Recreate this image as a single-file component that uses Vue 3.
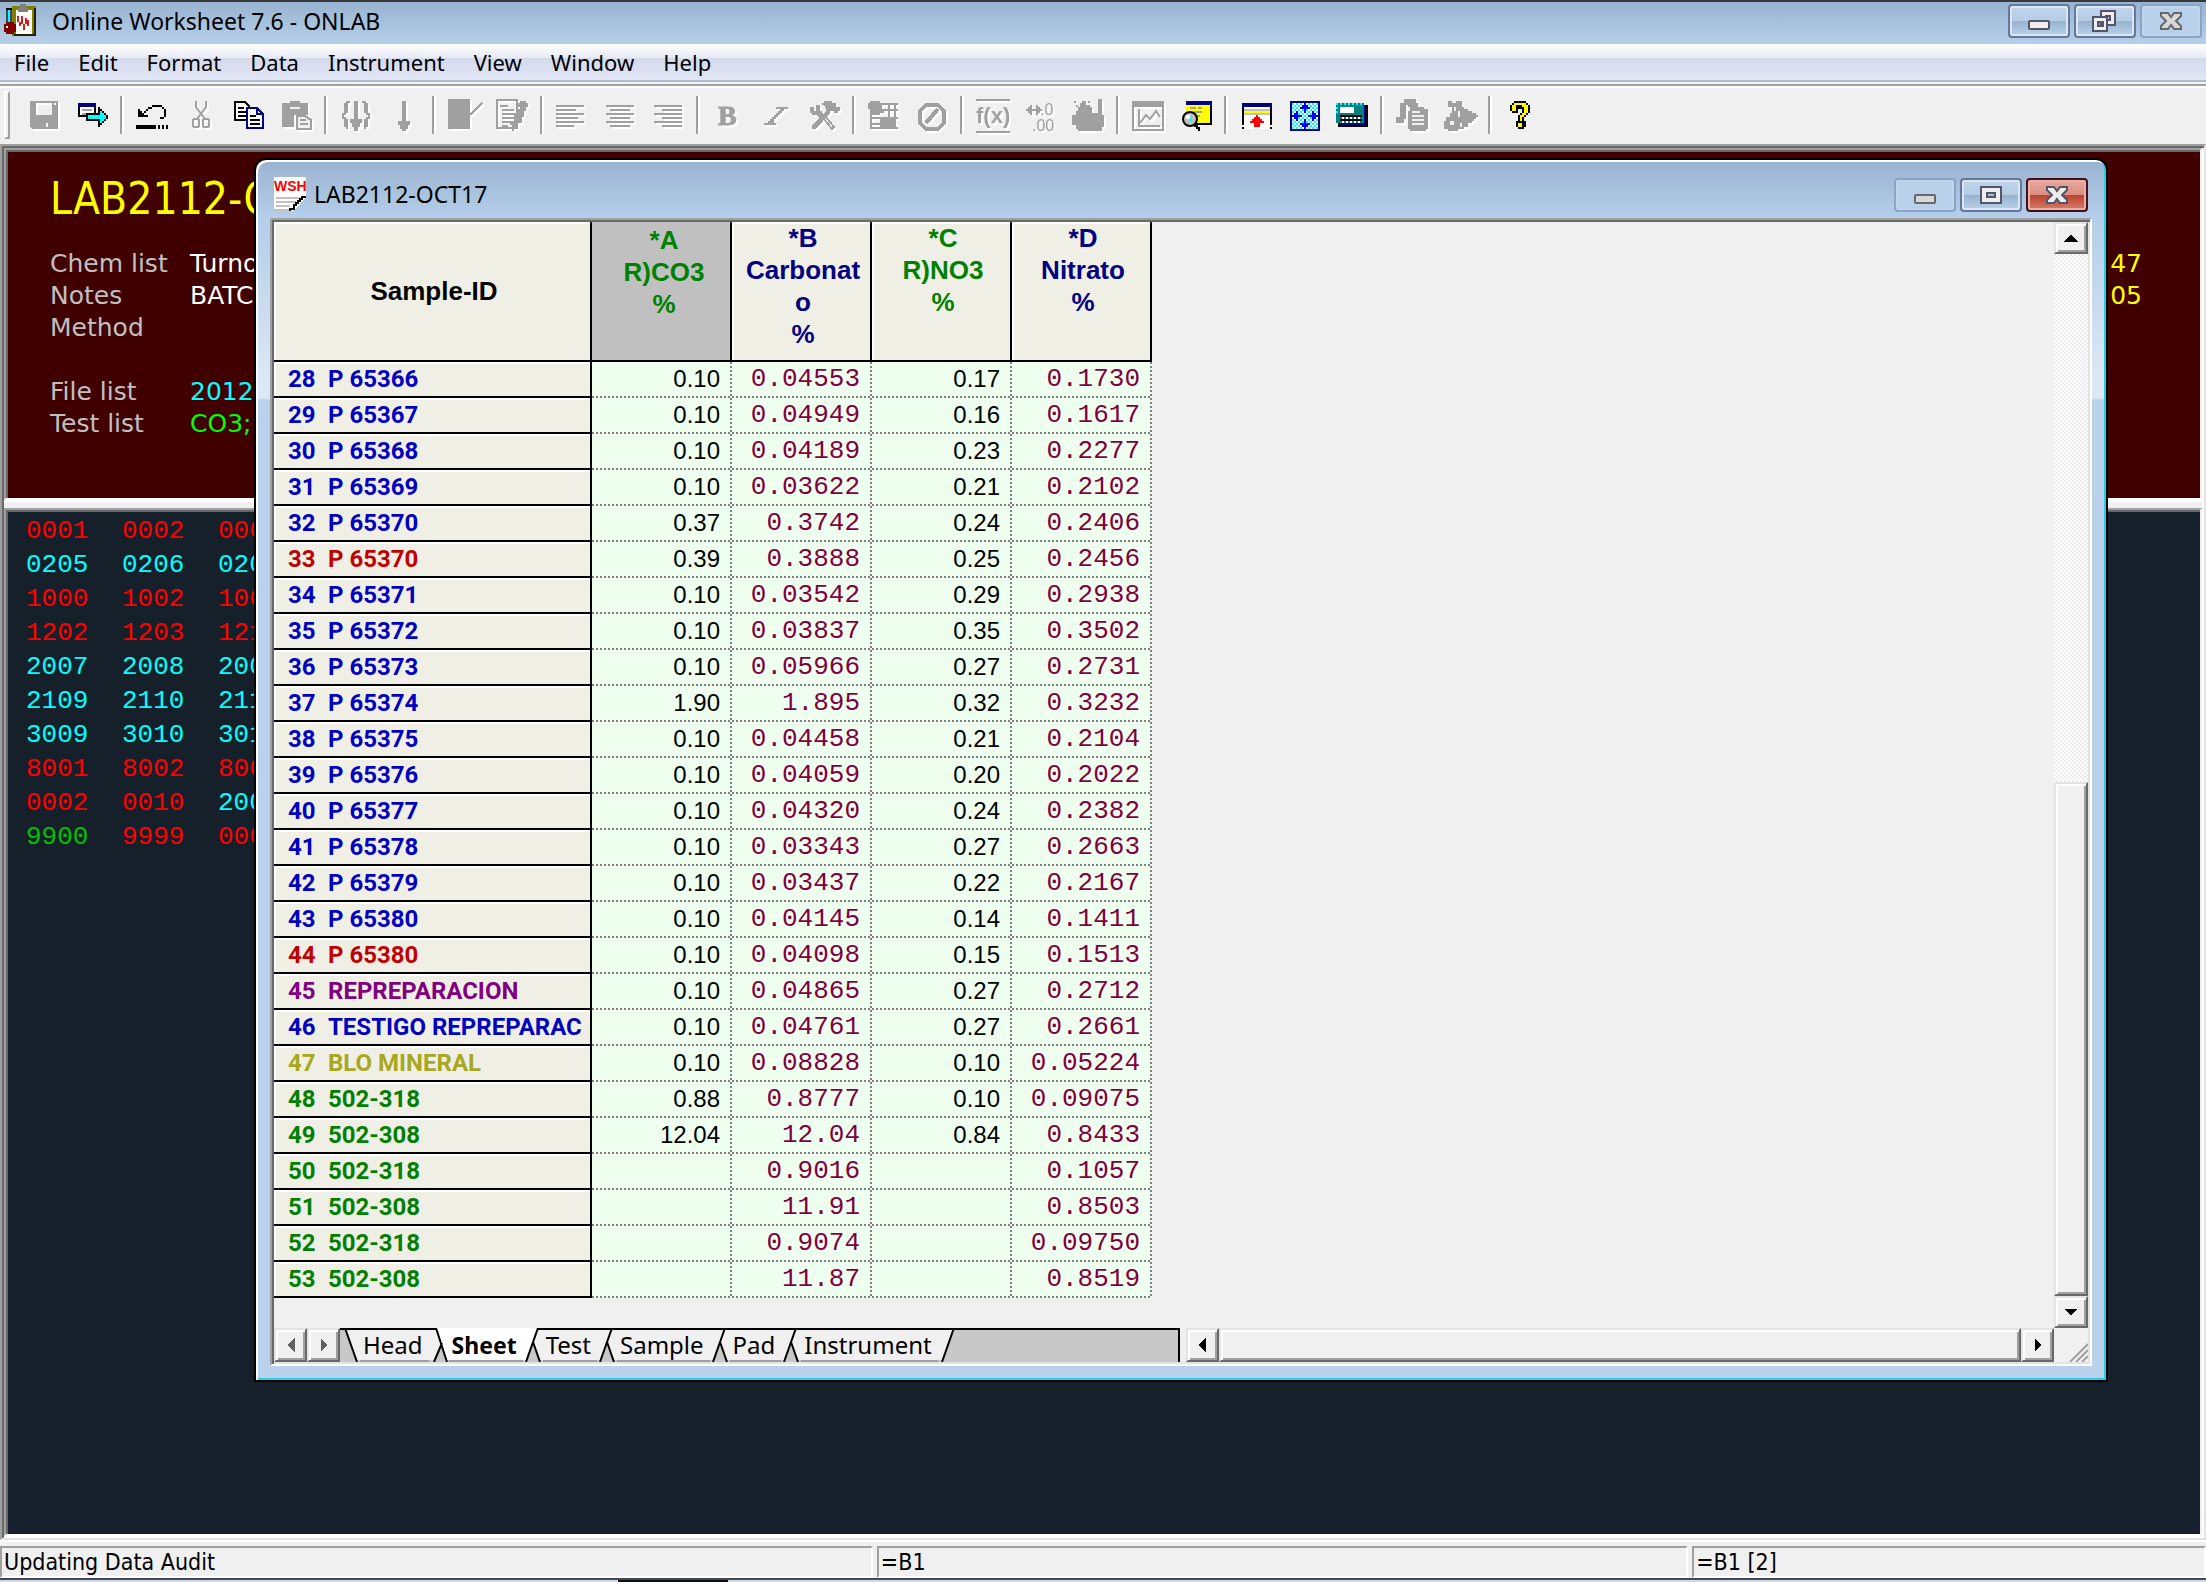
<template>
	<div class="app">
		<header class="titlebar">
			<svg class="app-icon" viewBox="0 0 16 16" shape-rendering="crispEdges">
				<path d="M4 1h12v15H4z" fill="#808000" />
				<path d="M15 2h1v14H5v-1h10z" fill="#202000" />
				<path d="M6 3h8v12H6z" fill="#fff" />
				<path d="M7 2h5v2H7zM8 0h3v2H8z" fill="#808080" />
				<path d="M7 6v3M9 6v4M11 7v3M8 9v2M10 10v3M12 8v3" stroke="#d02020" />
				<path d="M1 2h3v1H1z" fill="#000" />
				<path d="M2 3h1v6H2z" fill="#0ff" />
				<path d="M1 3h1v6H1zM3 3h1v6H3z" fill="#446" />
				<path d="M1 9h4v1h1v4H5v1H1v-1H0v-4h1z" fill="#800000" />
				<path d="M1 11h1v1H1z" fill="#fff" />
			</svg>
			<h1>Online Worksheet 7.6 - ONLAB</h1>
			<div class="window-buttons">
				<button type="button" aria-label="Minimize" class="win-btn">
					<svg viewBox="0 0 31 17"><rect x="10.5" y="8.5" width="10" height="4" rx="0.5" /></svg>
				</button>
				<button type="button" aria-label="Restore" class="win-btn">
					<svg viewBox="0 0 31 17">
						<path d="M13.5 3.500h7v7h-7zM16 6h2v2h-2z" fill-rule="evenodd" />
						<path d="M9.500 6.500h7v7h-7zM12 9h2.500v2H12z" fill-rule="evenodd" />
					</svg>
				</button>
				<button type="button" aria-label="Close" class="win-btn pale">
					<svg viewBox="0 0 31 17">
						<path d="M10.500 4.500h3.500l1.500 2 1.500-2h3.500v1.500l-2.500 2.500 2.500 2.500v1.500H17l-1.500-2-1.500 2h-3.500V11L13 8.500 10.500 6z" />
					</svg>
				</button>
			</div>
		</header>

		<nav class="menubar">
			<button v-for="item in menu" :key="item" type="button">{{ item }}</button>
		</nav>

		<div class="toolbar">
			<span class="grip"></span>
			<template v-for="(tool, i) in tools" :key="i">
				<span v-if="tool === '|'" class="separator"></span>
				<button v-else type="button" :aria-label="tool.name" :disabled="tool.off">
					<svg viewBox="0 0 16 16" shape-rendering="crispEdges" v-html="tool.art"></svg>
				</button>
			</template>
		</div>

		<main class="workspace">
			<section class="head-pane">
				<h2>LAB2112-OCT17</h2>
				<div class="head-body">
					<dl>
						<template v-for="(line, i) in headLines" :key="i">
							<dt>{{ line.label }}</dt>
							<dd :class="line.tone">{{ line.value }}</dd>
						</template>
					</dl>
					<div class="times">
						<span>47</span>
						<span>05</span>
					</div>
				</div>
			</section>

			<section class="code-pane">
				<div v-for="(row, i) in codes" :key="i" class="code-row">
					<span v-for="(code, j) in row" :key="j" :class="code[1]">{{ code[0] }}</span>
				</div>
			</section>

			<section class="child">
				<header class="child-title">
					<svg class="doc-icon" viewBox="0 0 16 17" shape-rendering="crispEdges">
						<path d="M0 0h16v10l-6 7H0z" fill="#fff" />
						<path d="M1 10.500h12M1 12.500h10M1 14.500h7M0 16.500h8" stroke="#c0c0c0" />
						<path d="M16 10h-2v1h-1v1h-1v1h-1v1h-1v2H8v1" fill="none" stroke="#000" />
						<text x="0" y="7" font-size="7" class="doc-text">WSH</text>
					</svg>
					<h2>LAB2112-OCT17</h2>
					<div class="window-buttons">
						<button type="button" aria-label="Minimize sheet" class="win-btn pale">
							<svg viewBox="0 0 31 17"><rect x="10.5" y="8.5" width="10" height="4" rx="0.5" /></svg>
						</button>
						<button type="button" aria-label="Maximize sheet" class="win-btn">
							<svg viewBox="0 0 31 17">
								<path d="M10.500 4.500h10v8h-10zM13.500 7.500h4v2h-4z" fill-rule="evenodd" />
							</svg>
						</button>
						<button type="button" aria-label="Close sheet" class="win-btn close">
							<svg viewBox="0 0 31 17">
								<path d="M10.500 4.500h3.500l1.500 2 1.500-2h3.500v1.500l-2.500 2.500 2.500 2.500v1.500H17l-1.500-2-1.500 2h-3.500V11L13 8.500 10.500 6z" />
							</svg>
						</button>
					</div>
				</header>

				<div class="client">
					<div class="sheet-row">
						<div class="sheet">
							<table>
								<colgroup>
									<col class="id-col" />
									<col v-for="n in 4" :key="n" class="value-col" />
								</colgroup>
								<thead>
									<tr>
										<th scope="col" class="id-head">Sample-ID</th>
										<th scope="col" class="calc selected">*A<br />R)CO3<br />%</th>
										<th scope="col" class="raw">*B<br />Carbonat<br />o<br />%</th>
										<th scope="col" class="calc">*C<br />R)NO3<br />%</th>
										<th scope="col" class="raw">*D<br />Nitrato<br />%</th>
									</tr>
								</thead>
								<tbody>
									<tr v-for="(row, i) in rows" :key="i">
										<th scope="row" :class="row[0]">
											<span class="index">{{ i + 28 }}</span>{{ row[1] }}
										</th>
										<td>{{ row[2] }}</td>
										<td class="mono">{{ row[3] }}</td>
										<td>{{ row[4] }}</td>
										<td class="mono">{{ row[5] }}</td>
									</tr>
								</tbody>
							</table>
						</div>
						<div class="vscroll">
							<button type="button" aria-label="Scroll up" class="bevel">
								<svg viewBox="0 0 16 16" shape-rendering="crispEdges"><path d="M8 6l4 4H4z" /></svg>
							</button>
							<span class="track"></span>
							<span class="bevel thumb"></span>
							<button type="button" aria-label="Scroll down" class="bevel">
								<svg viewBox="0 0 16 16" shape-rendering="crispEdges"><path d="M8 10L4 6h8z" /></svg>
							</button>
						</div>
					</div>

					<div class="bottom-row">
						<div class="tab-strip">
							<button type="button" aria-label="Previous tab" class="bevel dim">
								<svg viewBox="0 0 16 16" shape-rendering="crispEdges"><path d="M6 8l4-4v8z" /></svg>
							</button>
							<button type="button" aria-label="Next tab" class="bevel dim">
								<svg viewBox="0 0 16 16" shape-rendering="crispEdges"><path d="M10 8L6 4v8z" /></svg>
							</button>
							<div class="tabs">
								<svg class="slant" viewBox="0 0 20 34">
									<path d="M6 2h14v30h-4z" fill="#f0f0f0" />
									<path d="M0 1h20M5 0l12 34" stroke="#000" stroke-width="2" />
								</svg>
								<template v-for="(tab, i) in tabs" :key="tab">
									<button type="button" class="tab" :class="{ active: tab === 'Sheet' }">{{ tab }}</button>
									<svg class="slant" viewBox="0 0 20 34">
										<template v-if="tab === 'Head'">
											<path d="M0 0h20v32H0z" fill="#f0f0f0" />
											<path d="M7 0h13v32h-2z" fill="#fff" />
											<path d="M12 17L4 34h14z" fill="#c8c8c8" />
											<path d="M0 1h7M7 0l11 34M13 15L5 34" stroke="#000" stroke-width="2" fill="none" />
										</template>
										<template v-else-if="i < tabs.length - 1">
											<path d="M0 0h20v32H0z" fill="#f0f0f0" />
											<path d="M0 0h14L4 32H0z" :fill="tab === 'Sheet' ? '#fff' : '#f0f0f0'" />
											<path d="M9 15L3 34h14z" fill="#c8c8c8" />
											<path
												:d="tab === 'Sheet' ? 'M14 1h6' : 'M0 1h20'"
												stroke="#000"
												stroke-width="2"
											/>
											<path d="M15 0L3 34M10 14l7 20" stroke="#000" stroke-width="2" fill="none" />
										</template>
										<template v-else>
											<path d="M0 0h15L4 32H0z" fill="#f0f0f0" />
											<path d="M0 1h20M16 0L4 34" stroke="#000" stroke-width="2" />
										</template>
									</svg>
								</template>
							</div>
						</div>
						<div class="hscroll">
							<button type="button" aria-label="Scroll left" class="bevel">
								<svg viewBox="0 0 16 16" shape-rendering="crispEdges"><path d="M6 8l4-4v8z" /></svg>
							</button>
							<span class="bevel thumb"></span>
							<button type="button" aria-label="Scroll right" class="bevel">
								<svg viewBox="0 0 16 16" shape-rendering="crispEdges"><path d="M10 8L6 4v8z" /></svg>
							</button>
						</div>
						<svg class="size-grip" viewBox="0 0 34 34">
							<path d="M16 34L34 16M22 34l12-12M28 34l6-6" stroke="#a0a0a0" stroke-width="2" />
						</svg>
					</div>
				</div>
			</section>
		</main>

		<footer class="statusbar">
			<span class="wide">Updating Data Audit</span>
			<span class="mid">=B1</span>
			<span class="end">=B1 [2]</span>
		</footer>
		<div class="taskbar-edge"></div>
	</div>
</template>

<script setup>
const menu = ['File', 'Edit', 'Format', 'Data', 'Instrument', 'View', 'Window', 'Help']
const tabs = ['Head', 'Sheet', 'Test', 'Sample', 'Pad', 'Instrument']

const headLines = [
	{ label: 'Chem list', value: 'Turno', tone: 'white' },
	{ label: 'Notes', value: 'BATCH', tone: 'white' },
	{ label: 'Method', value: '', tone: 'white' },
	{ label: '', value: '', tone: 'white' },
	{ label: 'File list', value: '2012', tone: 'cyan' },
	{ label: 'Test list', value: 'CO3;', tone: 'lime' }
]

const codes = [
	[['0001', 'red'], ['0002', 'red'], ['000', 'red']],
	[['0205', 'cyan'], ['0206', 'cyan'], ['020', 'cyan']],
	[['1000', 'red'], ['1002', 'red'], ['100', 'red']],
	[['1202', 'red'], ['1203', 'red'], ['121', 'red']],
	[['2007', 'cyan'], ['2008', 'cyan'], ['200', 'cyan']],
	[['2109', 'cyan'], ['2110', 'cyan'], ['211', 'cyan']],
	[['3009', 'cyan'], ['3010', 'cyan'], ['301', 'cyan']],
	[['8001', 'red'], ['8002', 'red'], ['800', 'red']],
	[['0002', 'red'], ['0010', 'red'], ['200', 'cyan']],
	[['9900', 'green'], ['9999', 'red'], ['000', 'red']]
]

// colour, sample id, A, B, C, D
const rows = [
	['blue', 'P 65366', '0.10', '0.04553', '0.17', '0.1730'],
	['blue', 'P 65367', '0.10', '0.04949', '0.16', '0.1617'],
	['blue', 'P 65368', '0.10', '0.04189', '0.23', '0.2277'],
	['blue', 'P 65369', '0.10', '0.03622', '0.21', '0.2102'],
	['blue', 'P 65370', '0.37', '0.3742', '0.24', '0.2406'],
	['red', 'P 65370', '0.39', '0.3888', '0.25', '0.2456'],
	['blue', 'P 65371', '0.10', '0.03542', '0.29', '0.2938'],
	['blue', 'P 65372', '0.10', '0.03837', '0.35', '0.3502'],
	['blue', 'P 65373', '0.10', '0.05966', '0.27', '0.2731'],
	['blue', 'P 65374', '1.90', '1.895', '0.32', '0.3232'],
	['blue', 'P 65375', '0.10', '0.04458', '0.21', '0.2104'],
	['blue', 'P 65376', '0.10', '0.04059', '0.20', '0.2022'],
	['blue', 'P 65377', '0.10', '0.04320', '0.24', '0.2382'],
	['blue', 'P 65378', '0.10', '0.03343', '0.27', '0.2663'],
	['blue', 'P 65379', '0.10', '0.03437', '0.22', '0.2167'],
	['blue', 'P 65380', '0.10', '0.04145', '0.14', '0.1411'],
	['red', 'P 65380', '0.10', '0.04098', '0.15', '0.1513'],
	['purple', 'REPREPARACION', '0.10', '0.04865', '0.27', '0.2712'],
	['blue', 'TESTIGO REPREPARAC', '0.10', '0.04761', '0.27', '0.2661'],
	['olive', 'BLO MINERAL', '0.10', '0.08828', '0.10', '0.05224'],
	['green', '502-318', '0.88', '0.8777', '0.10', '0.09075'],
	['green', '502-308', '12.04', '12.04', '0.84', '0.8433'],
	['green', '502-318', '', '0.9016', '', '0.1057'],
	['green', '502-308', '', '11.91', '', '0.8503'],
	['green', '502-318', '', '0.9074', '', '0.09750'],
	['green', '502-308', '', '11.87', '', '0.8519']
]

const G = '#a0a0a0'

/**
 * Toolbar artwork, drawn on a 16 x 16 grid
 */
const tools = [
	{ name: 'Save', off: true, art: `<path fill="${G}" fill-rule="evenodd" d="M1 1h14v14H2l-1-1zM4 2v6h8V2zM13 2v1h1V2zM9 12v2h1v-2z"/>` },
	{ name: 'Send', art: '<path fill="#000" d="M1 2h9v7H1z"/><path fill="#000080" d="M1 2h9v2H1z"/><path fill="#fff" d="M2 4h7v4H2z"/><path fill="#a0a0a0" d="M3 5h5v1H3zM3 7h3v1H3z"/><path fill="#000" d="M5 7h6V4h1v1h1v1h1v1h1v1h1v2h-1v1h-1v1h-1v1h-1v1h-1v-3H5z"/><path fill="#0ff" d="M6 8h6V6h1v1h1v1h1v2h-1v1h-1v1h-1v-2H6z"/>' },
	'|',
	{ name: 'Undo', art: '<path fill="#000" d="M1 5h1v1h1v1h1v1h2v1H1zM4 6h1V5h1V4h2V3h5v1h1v1h1v4h-1v1h-2V9h2V5h-1V4H8v1H6v1H5v1H4zM0 13h10v2H0zM11 13h1v2h-1zM13 13h1v2h-1zM15 13h1v2h-1z"/>' },
	{ name: 'Cut', off: true, art: `<path fill="none" stroke="${G}" shape-rendering="auto" d="M6 1v3l4.500 6M11 1v3L6.500 10"/><rect x="4.500" y="10" width="3" height="4" rx="1" fill="none" stroke="${G}"/><rect x="9.500" y="10" width="3" height="4" rx="1" fill="none" stroke="${G}"/>` },
	{ name: 'Copy', art: '<path fill="#fff" stroke="#000" d="M1.500 1.500h5l2 2v7h-7z"/><path stroke="#000" d="M3 4.500h3M3 6.500h4M3 8.500h4"/><path fill="#fff" stroke="#000080" d="M7.500 4.500h5l3 3v7h-8z"/><path fill="none" stroke="#000080" d="M12.500 4.500v3h3"/><path stroke="#000" d="M9 8.500h3M9 10.500h5M9 12.500h5"/>' },
	{ name: 'Paste', off: true, art: `<path fill="${G}" d="M1 2h4V1h5v1h4v6H7v6H1z"/><path stroke="#f0f0f0" d="M5 4.500h5"/><path fill="#f0f0f0" stroke="${G}" d="M8.500 8.500h4l3 2v4.500h-7z"/><path stroke="${G}" d="M10 10.500h3M10 12.500h4"/>` },
	'|',
	{ name: 'Fill all', off: true, art: `<path fill="${G}" d="M3 1h2v1H4v5H3v1H2v1h1v1h1v5h1v-1 1H3v-1H2v-4H1V7h1V2h1zM13 1h-2v1h1v5h1v1h1v1h-1v1h-1v5h-1 2v-1h1v-4h1V7h-1V2h-1zM7 1h2v9h2v2h-1v2H9v2H7v-2H6v-2H5v-2h2z"/>` },
	{ name: 'Fill down', off: true, art: `<path fill="${G}" d="M7 1h2v10h2v2h-1v2H9v1H7v-1H6v-2H5v-2h2z"/>` },
	'|',
	{ name: 'Open record', off: true, art: `<path fill="${G}" d="M0 0h11v15H0z"/><path stroke="${G}" d="M11 8l6-6"/>` },
	{ name: 'Edit record', off: true, art: `<path fill="none" stroke="${G}" d="M.500.500h10v14H.500z"/><path stroke="${G}" d="M2 3.500h4M3 5.500h6M3 7.500h8M3 9.500h6M3 11.500h7M3 13.500h3"/><path fill="${G}" d="M12 1h3v1h1v2h-1v2h-1v3h-1v3h-2v2H9v2H8v-3H7v-2h2V8h2V5h1V4h-1V2h1z"/>` },
	'|',
	{ name: 'Align left', off: true, art: `<path stroke="${G}" d="M0 3.500h14M0 5.500h10M0 7.500h14M0 9.500h11M0 11.500h14M0 13.500h9"/>` },
	{ name: 'Center', off: true, art: `<path stroke="${G}" d="M1 3.500h14M3 5.500h10M1 7.500h14M3 9.500h10M1 11.500h14M3 13.500h10"/>` },
	{ name: 'Align right', off: true, art: `<path stroke="${G}" d="M1 3.500h14M5 5.500h10M1 7.500h14M5 9.500h10M1 11.500h14M5 13.500h10"/>` },
	'|',
	{ name: 'Bold', off: true, art: `<text x="3" y="13" font-family="Liberation Serif, serif" font-weight="700" font-size="14" stroke="${G}" stroke-width=".5" fill="${G}">B</text>` },
	{ name: 'Italic', off: true, art: `<path fill="${G}" d="M8 4h6v1h-2v1h-1v1h-1v1h-1v1H8v1H7v2h1v1H2v-1h2v-1h1v-1h1V9h1V8h1V7h1V6h1V5H8z"/>` },
	{ name: 'Tools', off: true, art: `<path fill="${G}" d="M1 4h2v2h1V3h2v3h1v1l2 2-2 2-3-3H2V7H1zM7 2h1V1h4v1h2v2h2v2h-1v1h-2V6h-2v1l-7 8H2v-2l7-7V5L8 3H7z"/><path stroke="${G}" fill="none" d="M8 10l4 5 1-1-4-5"/>` },
	'|',
	{ name: 'Table setup', off: true, art: `<path fill="none" stroke="${G}" d="M1.500 6v8.500h7M1 9.500h6M1 12.500h6M7 2.500h8M7 5.500h8M7 9.500h8M10.500 2v8M13.500 2v8M12 14.500h3"/><path fill="${G}" d="M1 1h5v1h1v4h1v1H6v1H2V6H1V5H0V2h1zM8 9h4v1h2v4h-1v1H8v-1H6v-4h2z"/>` },
	{ name: 'Disable', off: true, art: `<path fill="none" stroke="${G}" stroke-width="2" d="M5 3h6l3 3v6l-3 3H5l-3-3V6z"/><path stroke="${G}" stroke-width="2" d="M5 12l6-7"/>` },
	'|',
	{ name: 'Function', off: true, art: `<path fill="${G}" d="M0 0h17v1H0zM0 16h17v1H0z"/><text x="0" y="12" font-family="Liberation Sans, sans-serif" font-weight="700" font-size="11" fill="${G}">f(x)</text>` },
	{ name: 'Decimals', off: true, art: `<path fill="${G}" d="M1 5h1V4h1V3h1v2h2V3h1v1h1v1h1v1H8v1H7v1H6V6H4v2H3V7H2V6H1z"/><text x="8" y="8" font-family="Liberation Sans, sans-serif" font-size="8" fill="${G}">.0</text><text x="4" y="16" font-family="Liberation Sans, sans-serif" font-size="8" fill="${G}">.00</text>` },
	{ name: 'Hold', off: true, art: `<path fill="${G}" d="M1 1h1v1H1zM8 1h1v1H8zM2 3h1v1H2zM4 2h1V1h2v2h2v1h1v3h3V0h2v8h1v6h-1v2H3v-1H2v-2H0V8h2V6h1V4h1z"/>` },
	'|',
	{ name: 'Chart', off: true, art: `<path fill="${G}" fill-rule="evenodd" d="M0 1h16v15H0zM1 4v11h14V4z"/><path fill="none" stroke="${G}" d="M3.500 5v8.500H14"/><path fill="none" stroke="${G}" shape-rendering="auto" d="M4 12l3-4 2 2 3-4 2 3"/>` },
	{ name: 'Find', art: '<path fill="#000" d="M4 2h12v11H4z"/><path fill="#ff0" d="M3 3h12v9H3z"/><path fill="#000080" d="M3 1h13v2H3z"/><path fill="#a0a0a0" d="M5 4h3v1H5zM9 4h2v1H9zM7 6h4v1H7zM8 8h2v1H8z"/><circle cx="5" cy="10" r="3.500" fill="#c0c0c0" stroke="#000" shape-rendering="auto"/><path fill="#fff" d="M3 8h2v2H3z"/><path fill="#0ff" d="M5 9h1v2H5z"/><path fill="#000" d="M7 12h2v2h1v2H9v-1H8v-1H7z"/>' },
	'|',
	{ name: 'Move up', art: '<path fill="#fff" d="M1 2h14v13H1z"/><path fill="#000080" d="M1 2h15v2H1z"/><path fill="#c0c0c0" d="M2 5h13v3H2z"/><path fill="#ff0" d="M2 6h13v1H2z"/><path fill="#000" d="M1 4h1v9H1zM15 4h1v9h-1zM1 14h1v1H1zM15 14h1v1h-1z"/><path fill="#f00" d="M8 8h1v1h1v1h1v1h1v1h-2v2H7v-2H5v-1h1v-1h1V9h1z"/>' },
	{ name: 'Expand', art: '<defs><pattern id="check" width="2" height="2" patternUnits="userSpaceOnUse"><path fill="#fff" d="M0 0h2v2H0z"/><path fill="#0ff" d="M0 0h1v1H0zM1 1h1v1H1z"/></pattern></defs><path fill="url(#check)" stroke="#000080" d="M1.500 1.500h14v14h-14z"/><path fill="#00f" d="M8 2h1v1h1v1h1v1H9v2H8V5H6V4h1V3h1zM8 15h1v-1h1v-1h1v-1H9v-2H8v2H6v1h1v1h1zM2 8h1V7h1V6h1v2h2v1H5v2H4v-1H3V9H2zM15 8h-1V7h-1V6h-1v2h-2v1h2v2h1v-1h1V9h1z"/>' },
	{ name: 'Calculator', art: '<path fill="#000" d="M1 3h15v11H1z"/><path fill="#000080" d="M14 3h1v10H2v-1h12z"/><path fill="#008080" d="M0 2h14v10H0z"/><path fill="#0ff" d="M0 2h1v1H0zM2 2h1v1H2zM4 2h1v1H4zM6 2h1v1H6zM8 2h1v1H8zM10 2h1v1h-1zM12 2h1v1h-1zM0 4h1v1H0zM0 6h1v1H0z"/><path fill="#fff" d="M2 4h7v3H2zM3 9h1v1H3zM5 9h1v1H5zM7 9h1v1H7zM9 9h1v1H9zM11 9h1v1h-1zM3 11h1v1H3zM5 11h1v1H5zM7 11h1v1H7zM9 11h1v1H9zM11 11h1v1h-1z"/><path fill="#000" d="M2 8h11v1H2zM2 10h11v1H2z"/>' },
	'|',
	{ name: 'Documents', off: true, art: `<path fill="${G}" d="M4 0h6v2h1v2h3v1h2v10h-1v1H7v-1H6V6h1V4H6V3H5v7H4v2H0V9h2V2h2z"/><path stroke="#f0f0f0" d="M8 6.500h4M8 8.500h6M8 10.500h6M8 12.500h6"/>` },
	{ name: 'Labels', off: true, art: `<path fill="${G}" d="M2 1h2v1h2V1h3v3h1v1h2v1h2v1h2v1h1v1h-1v1h-1v1h-1v1h-2v2h-2v1H7v1H2v-1H0v-4h1v-2h2V7h1V4H2z"/><path fill="#f0f0f0" d="M5 4h1v2H5zM7 6h1v3H7zM3 11h2v2H3zM8 12h1v2H8z"/>` },
	'|',
	{ name: 'Help', art: '<path fill="#000" d="M5 1h6v1h1v1h1v4h-1v1h-1v1h-1v2h1v3h-1v1H7v-1H6v-3h1V8h1V7h1V5H7v2H4V6H3V3h1V2h1z"/><path fill="#ff0" d="M5 2h6v1h1v4h-1v1h-1v1H9v2H8V8h1V7h1V4H9V3H6v3H4V3h1zM7 12h2v2H7z"/>' }
]
</script>

<style>
body {
	margin: 0;
}
</style>

<style scoped>
.app {
	min-height: 100vh;
	display: flex;
	flex-direction: column;
	background: #f0f0f0;
	color: #000;
	font-family: 'Noto Sans', 'Open Sans', sans-serif;
	font-size: 22px;
}

button {
	font: inherit;
	color: inherit;
	margin: 0;
	padding: 0;
	border: 0;
	background: none;
}

h1,
h2,
dl,
dd {
	margin: 0;
	font-weight: 400;
}

.titlebar {
	box-sizing: border-box;
	height: 44px;
	padding: 2px 4px 0;
	border-top: 2px solid #38393c;
	background: linear-gradient(#98b3d0, #b6d0e9);
	display: flex;
	align-items: flex-start;
	gap: 16px;

	h1 {
		flex: 1;
		font-size: 23px;
		line-height: 34px;
	}
}

.app-icon {
	width: 32px;
	height: 32px;
}

.window-buttons {
	display: flex;
	gap: 4px;
}

.win-btn {
	box-sizing: border-box;
	width: 62px;
	height: 34px;
	border: 2px solid #63789a;
	border-radius: 4px;
	background: linear-gradient(#c1d5eb, #b5cce5 50%, #97b2cf 50%, #bad2eb);
	box-shadow: inset 0 0 0 2px #dbe6f6;

	svg {
		display: block;
		width: 62px;
		height: 34px;
		margin: -2px;
		fill: #eee;
		stroke: #53566b;
	}

	&.pale {
		border-color: #8ba4c4;
		background: #b8d0ea;
		box-shadow: inset 0 0 0 2px #bfd5ee;

		svg {
			fill: #d8d8d8;
			stroke: #66686c;
		}
	}

	&.close {
		border-color: #44101c;
		background: linear-gradient(#e9a79c, #dd8e82 50%, #b9402c 50%, #d5806c);
		box-shadow: inset 0 0 0 2px #e9b0a8;
	}
}

.menubar {
	box-sizing: border-box;
	height: 38px;
	border-bottom: 2px solid #b5b9cd;
	background: linear-gradient(#fff, #e8ebf5 38%, #d4daec 40%, #e0e6f6);
	display: flex;

	button {
		padding: 0 15px 0 14px;
		line-height: 36px;
	}
}

.toolbar {
	box-sizing: border-box;
	height: 60px;
	margin-top: 2px;
	padding: 2px 4px;
	border-top: 2px solid #a0a0a0;
	box-shadow: inset 0 2px #fff;
	display: flex;
	align-items: center;

	button {
		width: 48px;
		height: 48px;
		display: grid;
		place-items: center;
	}

	svg {
		width: 32px;
		height: 32px;
		overflow: visible;
	}

	button:disabled svg {
		filter: drop-shadow(2px 2px 0 #fff);
	}
}

.grip {
	box-sizing: border-box;
	width: 6px;
	height: 48px;
	margin-right: 10px;
	border: 2px solid #fff;
	border-right-color: #a0a0a0;
	border-bottom-color: #a0a0a0;
}

.separator {
	width: 2px;
	height: 38px;
	margin: 0 4px 0 4px;
	background: #a0a0a0;
	border-right: 2px solid #fff;
}

.workspace {
	box-sizing: border-box;
	position: relative;
	flex: 1;
	min-height: 600px;
	display: flex;
	flex-direction: column;
	padding: 2px;
	border: 2px solid #a0a0a0;
	border-right-color: #e3e3e3;
	border-bottom-color: #e3e3e3;
	background: linear-gradient(#696969, #696969) top / 100% 2px no-repeat,
		linear-gradient(#696969, #696969) left / 2px 100% no-repeat, #fff;
}

.head-pane,
.code-pane {
	box-sizing: border-box;
	border: 2px solid #a0a0a0;
	border-right-color: #f0f0f0;
	border-bottom-color: #fff;
	overflow: hidden;
}

.head-pane {
	height: 352px;
	padding: 16px 58px 0 44px;
	background: #400000;
	box-shadow: inset 2px 2px #696969;
	color: #c0c0c0;
	font-family: 'DejaVu Sans', Verdana, sans-serif;
	font-size: 25px;

	h2 {
		color: #ff0;
		font-family: 'DejaVu Sans Condensed', 'DejaVu Sans', sans-serif;
		font-size: 44px;
		line-height: 66px;
	}
}

.head-body {
	margin-top: 16px;
	line-height: 32px;
	display: flex;
	justify-content: space-between;
}

dl {
	display: grid;
	grid-template-columns: 140px auto;
	grid-auto-rows: 32px;
}

.times {
	color: #ff0;
	display: flex;
	flex-direction: column;
}

.white {
	color: #fff;
}

.cyan {
	color: #0ff;
}

.lime {
	color: #0f0;
}

.code-pane {
	flex: 1;
	margin-top: 8px;
	padding: 4px 20px;
	background: #16202a;
	box-shadow: inset 2px 2px #696969, 0 -6px #f0f0f0;
	font-family: 'Liberation Mono', monospace;
	font-size: 26px;
	line-height: 34px;

	.red {
		color: #f00;
	}

	.green {
		color: #00c000;
	}
}

.code-row {
	display: grid;
	grid-template-columns: repeat(3, 96px);
}

/* MDI child floating over the panes */
.child {
	position: absolute;
	inset: 12px 96px 156px 252px;
	box-sizing: border-box;
	display: flex;
	flex-direction: column;
	padding: 0 14px 14px;
	border: 2px solid #000;
	border-right-width: 2px;
	border-radius: 12px 12px 0 0;
	background: linear-gradient(#98b3d0, #b5cee9 58px, #b9d0ea 80px, #dce8f5 220px, #dce8f5 238px, #b9d1ea 240px);
	box-shadow: inset 2px 2px #fff, inset -2px -2px #2ccce6;
}

.child-title {
	box-sizing: border-box;
	height: 58px;
	display: flex;
	align-items: center;
	gap: 8px;
	padding: 10px 0 0 4px;

	h2 {
		flex: 1;
		font-size: 23px;
	}

	.window-buttons {
		align-self: flex-start;
		padding: 8px 4px 0 0;
	}
}

.doc-icon {
	width: 32px;
	height: 34px;
}

.doc-text {
	fill: #f00;
	font-family: 'Liberation Sans', sans-serif;
	font-weight: 700;
}

.client {
	flex: 1;
	min-height: 0;
	display: flex;
	flex-direction: column;
	background: #f0f0f0;
	border: 2px solid #a0a0a0;
	border-right-color: #fff;
	border-bottom-color: #fff;
	box-shadow: inset 2px 2px #696969, inset -2px -2px #e3e3e3;
	padding: 2px;
}

.sheet-row {
	flex: 1;
	min-height: 0;
	display: flex;
}

.sheet {
	flex: 1;
	overflow: hidden;
}

table {
	width: 878px;
	table-layout: fixed;
	border-spacing: 0;
	font-family: 'Liberation Sans', Arial, sans-serif;
}

.id-col {
	width: 318px;
}

.value-col {
	width: 140px;
}

th,
td {
	box-sizing: border-box;
	overflow: hidden;
	white-space: nowrap;
}

th {
	background: #f0efe6;
	border-right: 2px solid #000;
	border-bottom: 2px solid #000;
	box-shadow: inset 2px 2px #fff;
}

thead th {
	height: 140px;
	padding: 0 0 0 4px;
	vertical-align: top;
	font-size: 26px;
	line-height: 32px;
}

.id-head {
	vertical-align: middle;
}

.calc {
	color: #008000;
}

.raw {
	color: #000080;
}

.selected {
	padding: 2px 0 0 6px;
	background: #c0c0c0;
	box-shadow: none;
}

tbody th {
	height: 36px;
	padding: 0 0 0 14px;
	text-align: left;
	font-family: Roboto, Arial, sans-serif;
	font-size: 24px;
	line-height: 34px;

	&.blue {
		color: #0000c0;
	}

	&.red {
		color: #c00000;
	}

	&.purple {
		color: #800080;
	}

	&.olive {
		color: #a8a820;
	}

	&.green {
		color: #008000;
	}
}

.index {
	display: inline-block;
	width: 40px;
}

td {
	height: 36px;
	padding: 0 12px 2px 0;
	text-align: right;
	font-size: 24px;
	line-height: 34px;
	background: repeating-linear-gradient(90deg, #808080 0 2px, transparent 2px 4px) bottom / 100% 2px no-repeat,
		repeating-linear-gradient(#808080 0 2px, transparent 2px 4px) right / 2px 100% no-repeat, #efffef;
}

.mono {
	color: #800040;
	font-family: 'Liberation Mono', 'Courier New', monospace;
	font-size: 26px;
}

.bevel {
	box-sizing: border-box;
	background: #f0f0f0;
	border: 2px solid #e3e3e3;
	border-right-color: #696969;
	border-bottom-color: #696969;
	box-shadow: inset 2px 2px #fff, inset -2px -2px #a0a0a0;
	display: grid;
	place-items: center;

	svg {
		width: 28px;
		height: 28px;
	}

	&.dim svg {
		fill: #606060;
	}
}

.vscroll {
	width: 34px;
	display: flex;
	flex-direction: column;

	button {
		height: 32px;
	}

	.track {
		flex: 530;
		background: repeating-conic-gradient(#fff 0 25%, #ededed 0 50%) 0 0 / 4px 4px;
	}

	.thumb {
		flex: 512;
	}
}

.bottom-row {
	height: 34px;
	display: flex;
}

.tab-strip {
	box-sizing: border-box;
	flex: 906;
	display: flex;
	background: #c8c8c8;
	border-right: 2px solid #000;

	.bevel {
		width: 33px;
	}
}

.tabs {
	flex: 1;
	display: flex;
	box-shadow: inset 0 2px #000;
}

.slant {
	width: 20px;
	height: 34px;
}

.tab {
	box-sizing: border-box;
	height: 34px;
	padding: 0 6px 0 3px;
	line-height: 30px;
	font-size: 24px;
	background: #f0f0f0;
	border-top: 2px solid #000;
	border-bottom: 2px solid #a0a0a0;

	&.active {
		background: #fff;
		border-top-color: #fff;
		font-size: 23px;
		font-weight: 700;
	}
}

.hscroll {
	flex: 870;
	margin-left: 6px;
	display: flex;

	button {
		width: 33px;
	}

	.thumb {
		flex: 1;
	}
}

.size-grip {
	width: 34px;
	height: 34px;
}

.statusbar {
	box-sizing: border-box;
	height: 38px;
	padding-top: 4px;
	border-top: 2px solid #fff;
	display: flex;
	gap: 4px;
	font-family: 'DejaVu Sans Condensed', 'DejaVu Sans', sans-serif;
	font-size: 23px;
	line-height: 28px;

	span {
		box-sizing: border-box;
		padding-left: 2px;
		border: 2px solid #fff;
		border-top-color: #a0a0a0;
		border-left-color: #a0a0a0;
	}

	.wide {
		flex: 874;
	}

	.mid {
		flex: 812;
	}

	.end {
		flex: 512;
	}
}

.taskbar-edge {
	box-sizing: border-box;
	height: 4px;
	border-top: 2px solid #434857;
	background: linear-gradient(90deg, #cfdaec 28%, #101010 28% 33%, #cfdaec 33%);
}
</style>
